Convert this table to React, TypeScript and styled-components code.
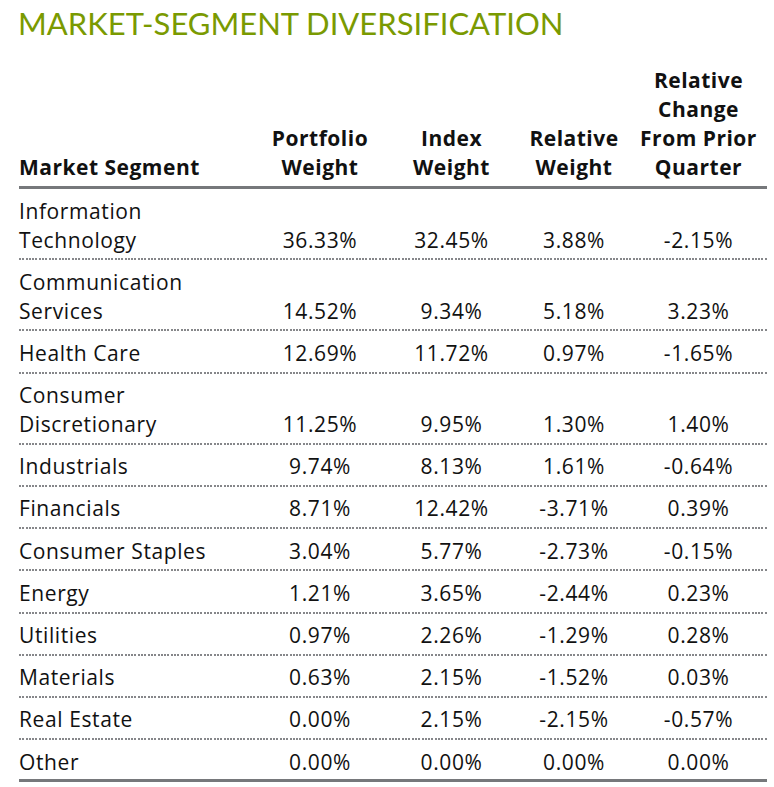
import React from "react";
import styled, { createGlobalStyle } from "styled-components";

const GlobalStyle = createGlobalStyle`
  html, body {
    margin: 0;
    padding: 0;
    background: #ffffff;
  }
  body {
    font-family: "Open Sans", Lato, "Liberation Sans", sans-serif;
    color: #111111;
  }
`;

const Page = styled.div`
  width: 774px;
  padding: 5px 7px 0 19px;
  box-sizing: border-box;
`;

const Title = styled.h1`
  margin: 0 0 0 -1px;
  font-family: Lato, "Open Sans", sans-serif;
  font-size: 31px;
  font-weight: 400;
  line-height: 36px;
  letter-spacing: 0;
  color: #7a9a01;
`;

const Table = styled.table`
  width: 748px;
  border-collapse: collapse;
  margin-top: 25px;
  table-layout: fixed;
`;

const HeadCell = styled.th<{ $left?: boolean; $width: number }>`
  width: ${(p) => p.$width}px;
  padding: 0 0 4px;
  font-size: 21px;
  font-weight: 700;
  line-height: 29px;
  letter-spacing: 0.5px;
  text-align: ${(p) => (p.$left ? "left" : "center")};
  vertical-align: bottom;
  border-bottom: 3px solid #76787b;
`;

const Row = styled.tr<{ $last?: boolean }>`
  background-image: ${(p) =>
    p.$last
      ? "linear-gradient(#76787b, #76787b)"
      : "repeating-linear-gradient(to right, #86878a 0 2px, transparent 2px 3.3px)"};
  background-size: 100% ${(p) => (p.$last ? "3px" : "2px")};
  background-position: left bottom;
  background-repeat: no-repeat;
`;

const Cell = styled.td<{ $left?: boolean }>`
  padding: 7.5px 0 5.7px;
  font-size: 21px;
  font-weight: 400;
  line-height: 29px;
  letter-spacing: 0.6px;
  text-align: ${(p) => (p.$left ? "left" : "center")};
  vertical-align: bottom;
`;

const SegmentName = styled.span`
  display: block;
  max-width: 210px;
`;

const columns = [
  { label: "Market Segment", width: 236, left: true },
  { label: "Portfolio Weight", width: 130 },
  { label: "Index Weight", width: 133 },
  { label: "Relative Weight", width: 112 },
  { label: "Relative Change From Prior Quarter", width: 137 },
];

const headLines: string[][] = [
  ["Market Segment"],
  ["Portfolio", "Weight"],
  ["Index", "Weight"],
  ["Relative", "Weight"],
  ["Relative", "Change", "From Prior", "Quarter"],
];

const rows: [string[], string, string, string, string][] = [
  [["Information", "Technology"], "36.33%", "32.45%", "3.88%", "-2.15%"],
  [["Communication", "Services"], "14.52%", "9.34%", "5.18%", "3.23%"],
  [["Health Care"], "12.69%", "11.72%", "0.97%", "-1.65%"],
  [["Consumer", "Discretionary"], "11.25%", "9.95%", "1.30%", "1.40%"],
  [["Industrials"], "9.74%", "8.13%", "1.61%", "-0.64%"],
  [["Financials"], "8.71%", "12.42%", "-3.71%", "0.39%"],
  [["Consumer Staples"], "3.04%", "5.77%", "-2.73%", "-0.15%"],
  [["Energy"], "1.21%", "3.65%", "-2.44%", "0.23%"],
  [["Utilities"], "0.97%", "2.26%", "-1.29%", "0.28%"],
  [["Materials"], "0.63%", "2.15%", "-1.52%", "0.03%"],
  [["Real Estate"], "0.00%", "2.15%", "-2.15%", "-0.57%"],
  [["Other"], "0.00%", "0.00%", "0.00%", "0.00%"],
];

export default function App() {
  return (
    <Page>
      <GlobalStyle />
      <Title>MARKET-SEGMENT DIVERSIFICATION</Title>
      <Table>
        <thead>
          <tr>
            {columns.map((col, i) => (
              <HeadCell key={col.label} $left={col.left} $width={col.width}>
                {headLines[i].map((line, j) => (
                  <React.Fragment key={line + j}>
                    {j > 0 && <br />}
                    {line}
                  </React.Fragment>
                ))}
              </HeadCell>
            ))}
          </tr>
        </thead>
        <tbody>
          {rows.map(([name, ...values], i) => (
            <Row key={name.join(" ")} $last={i === rows.length - 1}>
              <Cell $left>
                <SegmentName>
                  {name.map((line, j) => (
                    <React.Fragment key={line}>
                      {j > 0 && <br />}
                      {line}
                    </React.Fragment>
                  ))}
                </SegmentName>
              </Cell>
              {values.map((v, j) => (
                <Cell key={j}>{v}</Cell>
              ))}
            </Row>
          ))}
        </tbody>
      </Table>
    </Page>
  );
}
